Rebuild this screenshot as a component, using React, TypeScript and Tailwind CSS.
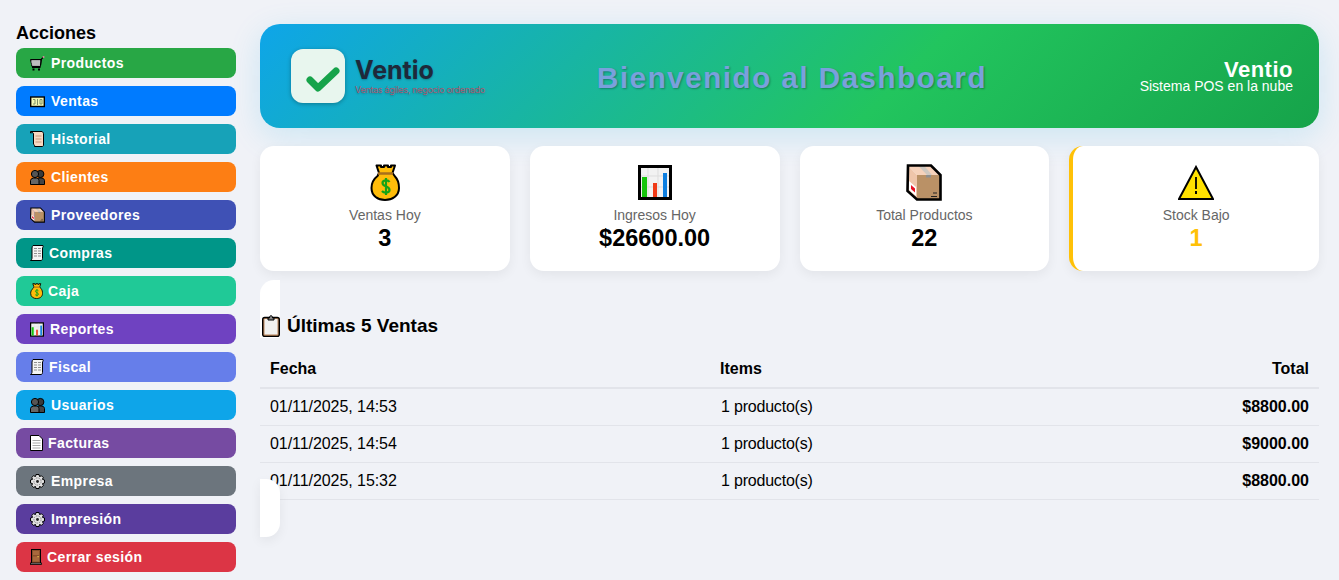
import type { ReactNode } from "react";

function Svg({ w, h, vw, vh, children }: { w: number; h: number; vw: number; vh: number; children: ReactNode }) {
  return (
    <svg width={w} height={h} viewBox={`0 0 ${vw} ${vh}`} className="block shrink-0">
      {children}
    </svg>
  );
}

function Bag({ w = 13, h = 16 }: { w?: number; h?: number }) {
  return (
    <Svg w={w} h={h} vw={30} vh={37}>
      <path d="M6.5 1.5 H11 V3 H14 V1.5 H18 V3 H21 V1.5 H25 L22.5 9 L25 12.5 C28.5 16 29 21 29 24 C29 32 22 36 15 36 C8 36 1.5 32 1.5 24 C1.5 20 3 15.5 7.5 12 L9 9 Z" fill="#ffbc0a" stroke="#000" strokeWidth="2" strokeLinejoin="round" />
      <path d="M8 9.5 H23" stroke="#a86f1c" strokeWidth="2.5" />
      <path d="M19.5 18 C18 15.5 12.5 16 12.5 19 C12.5 23 19.5 21.5 19.5 26 C19.5 29 14 29.5 12 27 M16 14 V31" fill="none" stroke="#16a316" strokeWidth="2.2" />
    </Svg>
  );
}

function Chart({ w = 14, h = 15 }: { w?: number; h?: number }) {
  return (
    <Svg w={w} h={h} vw={34} vh={35}>
      <rect x="1.5" y="1.5" width="31" height="32" fill="#f2f2f2" stroke="#000" strokeWidth="3" />
      <path d="M3 11 H31 M3 22 H31 M10 3 V32 M20 3 V32" stroke="#dddddd" strokeWidth="1" />
      <rect x="4" y="12" width="5" height="20" fill="#16c60c" />
      <rect x="15" y="18" width="4" height="14" fill="#f03a17" />
      <rect x="25" y="8" width="4" height="24" fill="#0c7ee0" />
    </Svg>
  );
}

function Box({ w = 15, h = 16 }: { w?: number; h?: number }) {
  return (
    <Svg w={w} h={h} vw={36} vh={37}>
      <path d="M2 1.5 H25 L34.5 11 H11 Z" fill="#f6d2bb" />
      <path d="M2 1.5 L11 11 V35.5 L2 27 Z" fill="#efc5aa" />
      <rect x="11" y="11" width="23.5" height="24.5" fill="#ba9166" />
      <path d="M12 1.5 H18 L26 11 H21 Z" fill="#cfc8c0" />
      <rect x="20" y="11" width="5" height="2.5" fill="#8f8f8f" />
      <path d="M3 17 L10 23 V32 L3 26 Z" fill="#fff" />
      <path d="M5 21 L9 24.5 V28.5 L5 25 Z" fill="#e81123" />
      <path d="M27 29 H31 M25 32.5 H31" stroke="#222" strokeWidth="1.2" />
      <path d="M2 1.5 H25 L34.5 11 V35.5 H11 L1.5 27 Z" fill="none" stroke="#000" strokeWidth="2.6" strokeLinejoin="miter" />
    </Svg>
  );
}

function Warning() {
  return (
    <Svg w={36} h={35} vw={36} vh={35}>
      <path d="M18 2 L35 34 H1 Z" fill="#ffe100" stroke="#000" strokeWidth="2" strokeLinejoin="miter" />
      <path d="M18 12 V24" stroke="#000" strokeWidth="1.8" />
      <rect x="17" y="26" width="2" height="3" fill="#000" />
    </Svg>
  );
}

function Cart() {
  return (
    <Svg w={15} h={15} vw={15} vh={15}>
      <path d="M0.5 3.5 H11 L10.5 10.5 H2 Z" fill="#8a8a8a" stroke="#000" strokeWidth="1" />
      <path d="M3 4 V10 M5 4 V10 M7 4 V10 M9 4 V10 M1 6 H10.5 M1.5 8 H10.5" stroke="#dcdcdc" strokeWidth="0.8" />
      <path d="M10.5 9 L11.5 3 L13.5 1" fill="none" stroke="#000" strokeWidth="1.2" />
      <path d="M12.7 1.5 L14.3 0.5" stroke="#e08aa0" strokeWidth="1.6" />
      <path d="M2 11.5 H10.5" stroke="#000" strokeWidth="1" />
      <rect x="2.5" y="12.5" width="2" height="2" fill="#000" />
      <rect x="8" y="12.5" width="2" height="2" fill="#000" />
    </Svg>
  );
}

function Banknote() {
  return (
    <Svg w={15} h={15} vw={15} vh={15}>
      <rect x="0.7" y="3" width="13.6" height="9.5" fill="#f4f8b4" stroke="#000" strokeWidth="1.4" />
      <path d="M3 5.5 H5 V10 H3 M7.5 5 V11 M10 5.5 H12 V10 H10 Z" fill="none" stroke="#7f9168" strokeWidth="1" />
    </Svg>
  );
}

function Scroll() {
  return (
    <Svg w={15} h={16} vw={15} vh={16}>
      <path d="M0.5 0.5 H12 C13 1 13.5 2 13.5 3 V14 C13.5 15 13 15.5 12 15.5 H4.5 C5 14.5 4 14 3.5 13 V3 C3.5 2 3 1 0.5 2 Z" fill="#f8d9c2" stroke="#000" strokeWidth="1" />
      <path d="M5.5 5 H11.5 M5.5 8 H11.5 M5.5 11 H11.5" stroke="#c99a7e" strokeWidth="1" />
    </Svg>
  );
}

function Users() {
  return (
    <Svg w={15} h={16} vw={15} vh={16}>
      <circle cx="10.3" cy="5" r="3.6" fill="#3a3a3a" stroke="#000" strokeWidth="1" />
      <path d="M7 15 V11 C7 9.5 9 9 10.5 9 C12.5 9 14.5 9.7 14.5 11.5 V15.5 H7 Z" fill="#444" stroke="#000" strokeWidth="1" />
      <circle cx="5" cy="5" r="3.6" fill="#555" stroke="#000" strokeWidth="1" />
      <path d="M0.5 15.5 V11.5 C0.5 9.7 3 9 5 9 C7 9 9 9.7 9 11.5 V15.5 Z" fill="#666" stroke="#000" strokeWidth="1" />
    </Svg>
  );
}

function Receipt() {
  return (
    <Svg w={14} h={16} vw={14} vh={16}>
      <path d="M3 0.5 H13 C13.5 1 13 2 12.5 3 V13.5 C12.5 14.5 12 15.5 11 15.5 H0.5 C1.5 15 2 14 2 13 V3 C2 2 2.5 1 3 0.5 Z" fill="#f4f4f4" stroke="#000" strokeWidth="1" />
      <path d="M4 3.5 H11 M4 6 H11 M4 8.5 H11 M4 11 H11" stroke="#8f8f8f" strokeWidth="1" strokeDasharray="3 1" />
    </Svg>
  );
}

function Doc() {
  return (
    <Svg w={13} h={16} vw={13} vh={16}>
      <path d="M0.5 0.5 H9 L12.5 4 V15.5 H0.5 Z" fill="#fff" stroke="#000" strokeWidth="1" />
      <path d="M2.5 5.5 H10.5 M2.5 8 H10.5 M2.5 10.5 H10.5 M2.5 13 H10.5" stroke="#a8a8a8" strokeWidth="1" />
    </Svg>
  );
}

function Gear() {
  return (
    <Svg w={15} h={15} vw={15} vh={15}>
      <path d="M6 0.5 H9 L9.5 2.5 L11.5 1.8 L13.3 3.6 L12.4 5.3 L14.5 6 V9 L12.5 9.6 L13.3 11.5 L11.5 13.3 L9.5 12.5 L9 14.5 H6 L5.5 12.5 L3.5 13.3 L1.7 11.5 L2.5 9.6 L0.5 9 V6 L2.6 5.3 L1.7 3.6 L3.5 1.8 L5.5 2.5 Z" fill="#e2e2e2" stroke="#000" strokeWidth="1" />
      <circle cx="7.5" cy="7.5" r="3.6" fill="none" stroke="#8a8a8a" strokeWidth="1" strokeDasharray="1.5 1" />
      <circle cx="7.5" cy="7.5" r="1.4" fill="#222" />
    </Svg>
  );
}

function Door() {
  return (
    <Svg w={12} h={16} vw={12} vh={16}>
      <rect x="1.5" y="0.5" width="9" height="14" fill="#8a4f2a" stroke="#000" strokeWidth="1" />
      <rect x="3" y="2" width="6" height="4" fill="#a9683c" />
      <rect x="3" y="7.5" width="6" height="5" fill="#a9683c" />
      <rect x="7.5" y="7" width="1.2" height="1.2" fill="#f2c94c" />
      <rect x="0.5" y="14" width="11" height="1.5" fill="#9a9a9a" stroke="#000" strokeWidth="0.8" />
    </Svg>
  );
}

function Clipboard() {
  return (
    <Svg w={18} h={22} vw={18} vh={22}>
      <rect x="0.7" y="2.5" width="16.6" height="19" rx="2" fill="#b9855a" stroke="#000" strokeWidth="1.4" />
      <rect x="2.5" y="4" width="13" height="15.5" fill="#f1f1ef" />
      <path d="M6 3 H7.5 C7.5 1.5 8 0.7 9 0.7 C10 0.7 10.5 1.5 10.5 3 H12 V5 H6 Z" fill="#8a8a8a" stroke="#000" strokeWidth="1" />
    </Svg>
  );
}

const actions = [
  { icon: <Cart />, label: "Productos", color: "bg-[#28a745]", slot: "w-[21px]" },
  { icon: <Banknote />, label: "Ventas", color: "bg-[#007bff]", slot: "w-[21px]" },
  { icon: <Scroll />, label: "Historial", color: "bg-[#17a2b8]", slot: "w-[21px]" },
  { icon: <Users />, label: "Clientes", color: "bg-[#fd7e14]", slot: "w-[21px]" },
  { icon: <Box />, label: "Proveedores", color: "bg-[#3f51b5]", slot: "w-[21px]" },
  { icon: <Receipt />, label: "Compras", color: "bg-[#009688]", slot: "w-[19px]" },
  { icon: <Bag />, label: "Caja", color: "bg-[#20c997]", slot: "w-[18px]" },
  { icon: <Chart />, label: "Reportes", color: "bg-[#6f42c1]", slot: "w-[20px]" },
  { icon: <Receipt />, label: "Fiscal", color: "bg-[#667eea]", slot: "w-[19px]" },
  { icon: <Users />, label: "Usuarios", color: "bg-[#0ea5e9]", slot: "w-[21px]" },
  { icon: <Doc />, label: "Facturas", color: "bg-[#764ba2]", slot: "w-[18px]" },
  { icon: <Gear />, label: "Empresa", color: "bg-[#6c757d]", slot: "w-[21px]" },
  { icon: <Gear />, label: "Impresión", color: "bg-[#5a3d9e]", slot: "w-[21px]" },
  { icon: <Door />, label: "Cerrar sesión", color: "bg-[#dc3545]", slot: "w-[17px]" },
];

const stats = [
  { icon: <Bag w={30} h={37} />, label: "Ventas Hoy", value: "3" },
  { icon: <Chart w={34} h={35} />, label: "Ingresos Hoy", value: "$26600.00" },
  { icon: <Box w={36} h={37} />, label: "Total Productos", value: "22" },
  { icon: <Warning />, label: "Stock Bajo", value: "1", warn: true },
];

const sales = [
  { date: "01/11/2025, 14:53", items: "1 producto(s)", total: "$8800.00" },
  { date: "01/11/2025, 14:54", items: "1 producto(s)", total: "$9000.00" },
  { date: "01/11/2025, 15:32", items: "1 producto(s)", total: "$8800.00" },
];

export default function App() {
  return (
    <div className="flex h-[580px] w-[1339px] overflow-hidden bg-[#f0f2f7] font-['Liberation_Sans',sans-serif] text-black">
      <aside className="w-[260px] shrink-0 pl-4 pr-6 pt-[23px]">
        <h3 className="mb-[5px] text-lg leading-[20px] font-bold">Acciones</h3>
        <div className="flex flex-col gap-2">
          {actions.map((a) => (
            <button
              key={a.label}
              className={`flex h-[30px] w-[220px] items-center rounded-lg pl-3.5 text-left text-sm font-bold tracking-[0.4px] text-white ${a.color}`}
            >
              <span className={`block ${a.slot}`}>{a.icon}</span>
              {a.label}
            </button>
          ))}
        </div>
      </aside>

      <main className="relative flex-1 pr-5 pt-6">
        {/* banner */}
        <header className="flex h-[104px] items-center justify-between rounded-[20px] bg-[linear-gradient(135deg,#0ea5e9_0%,#22c55e_60%,#16a34a_100%)] pl-[31px] pr-[26px] shadow-[0_8px_32px_rgba(14,165,233,0.16)]">
          <div className="flex w-[200px] items-center gap-[10px]">
            <div className="h-[54px] w-[54px] shrink-0 rounded-xl bg-[#e8f6ee] shadow-[0_1px_4px_rgba(0,0,0,0.3)]">
              <svg width="54" height="54" viewBox="0 0 54 54" fill="none">
                <path d="M19 31 L27 39 L45 22" stroke="#16a34a" strokeWidth="7" strokeLinecap="round" strokeLinejoin="round" />
              </svg>
            </div>
            <div className="font-['Inter',sans-serif]">
              <div className="text-[25px] leading-[28px] font-bold text-[#1e293b] [text-shadow:0_1px_2px_rgba(0,0,0,0.25)]">Ventio</div>
              <div className="text-[9px] leading-[12px] tracking-[-0.3px] whitespace-nowrap text-[#a85a72] [text-shadow:0_1px_2px_rgba(0,0,0,0.3)]">Ventas ágiles, negocio ordenado</div>
            </div>
          </div>
          <h1 className="mt-[3px] ml-[-47px] text-[30px] font-bold tracking-[1.3px] text-[#7aa0dc] [text-shadow:1px_1px_2px_rgba(0,0,0,0.3)]">
            Bienvenido al Dashboard
          </h1>
          <div className="mt-[2px] text-right">
            <div className="text-[22px] leading-[18px] font-bold tracking-[0.5px] text-white">Ventio</div>
            <div className="text-sm leading-[14px] font-light text-white">Sistema POS en la nube</div>
          </div>
        </header>

        {/* stats */}
        <div className="mt-[18px] grid grid-cols-4 gap-5">
          {stats.map((s) => (
            <div
              key={s.label}
              className={`flex h-[125px] flex-col items-center rounded-[14px] bg-white pt-[14px] shadow-[0_4px_12px_rgba(0,0,0,0.06)] ${s.warn ? "border-l-4 border-[#ffc107]" : ""}`}
            >
              <div className="flex h-[44px] items-center">{s.icon}</div>
              <div className="mt-[2px] text-sm leading-[18px] text-[#666]">{s.label}</div>
              <div className={`text-[23.5px] leading-[28px] font-bold ${s.warn ? "text-[#ffc107]" : ""}`}>{s.value}</div>
            </div>
          ))}
        </div>

        {/* white slivers of the panel behind the table */}
        <div className="absolute left-0 top-[280px] h-[58px] w-5 rounded-tl-[14px] bg-white" />
        <div className="absolute left-0 top-[479px] z-10 h-[58px] w-5 rounded-r-[14px] bg-white shadow-[0_4px_12px_rgba(0,0,0,0.06)]" />

        {/* table */}
        <section className="relative mt-[43px]">
          <h2 className="flex items-center gap-[7px] pl-[2px] text-[19px] leading-[24px] font-bold">
            <Clipboard />
            Últimas 5 Ventas
          </h2>
          <table className="mt-[12px] w-full text-base">
            <thead>
              <tr className="h-[38px] border-b-2 border-[#e2e4ea] text-left">
                <th className="w-[450px] px-[10px] font-bold">Fecha</th>
                <th className="px-[10px] font-bold">Items</th>
                <th className="px-[10px] text-right font-bold">Total</th>
              </tr>
            </thead>
            <tbody>
              {sales.map((s) => (
                <tr key={s.date} className="h-[37px] border-b border-[#e2e4ea]">
                  <td className="px-[10px] tracking-[-0.06px]">{s.date}</td>
                  <td className="pr-[10px] pl-[11px] tracking-[-0.2px]">{s.items}</td>
                  <td className="px-[10px] text-right font-bold">{s.total}</td>
                </tr>
              ))}
            </tbody>
          </table>
        </section>
      </main>
    </div>
  );
}
